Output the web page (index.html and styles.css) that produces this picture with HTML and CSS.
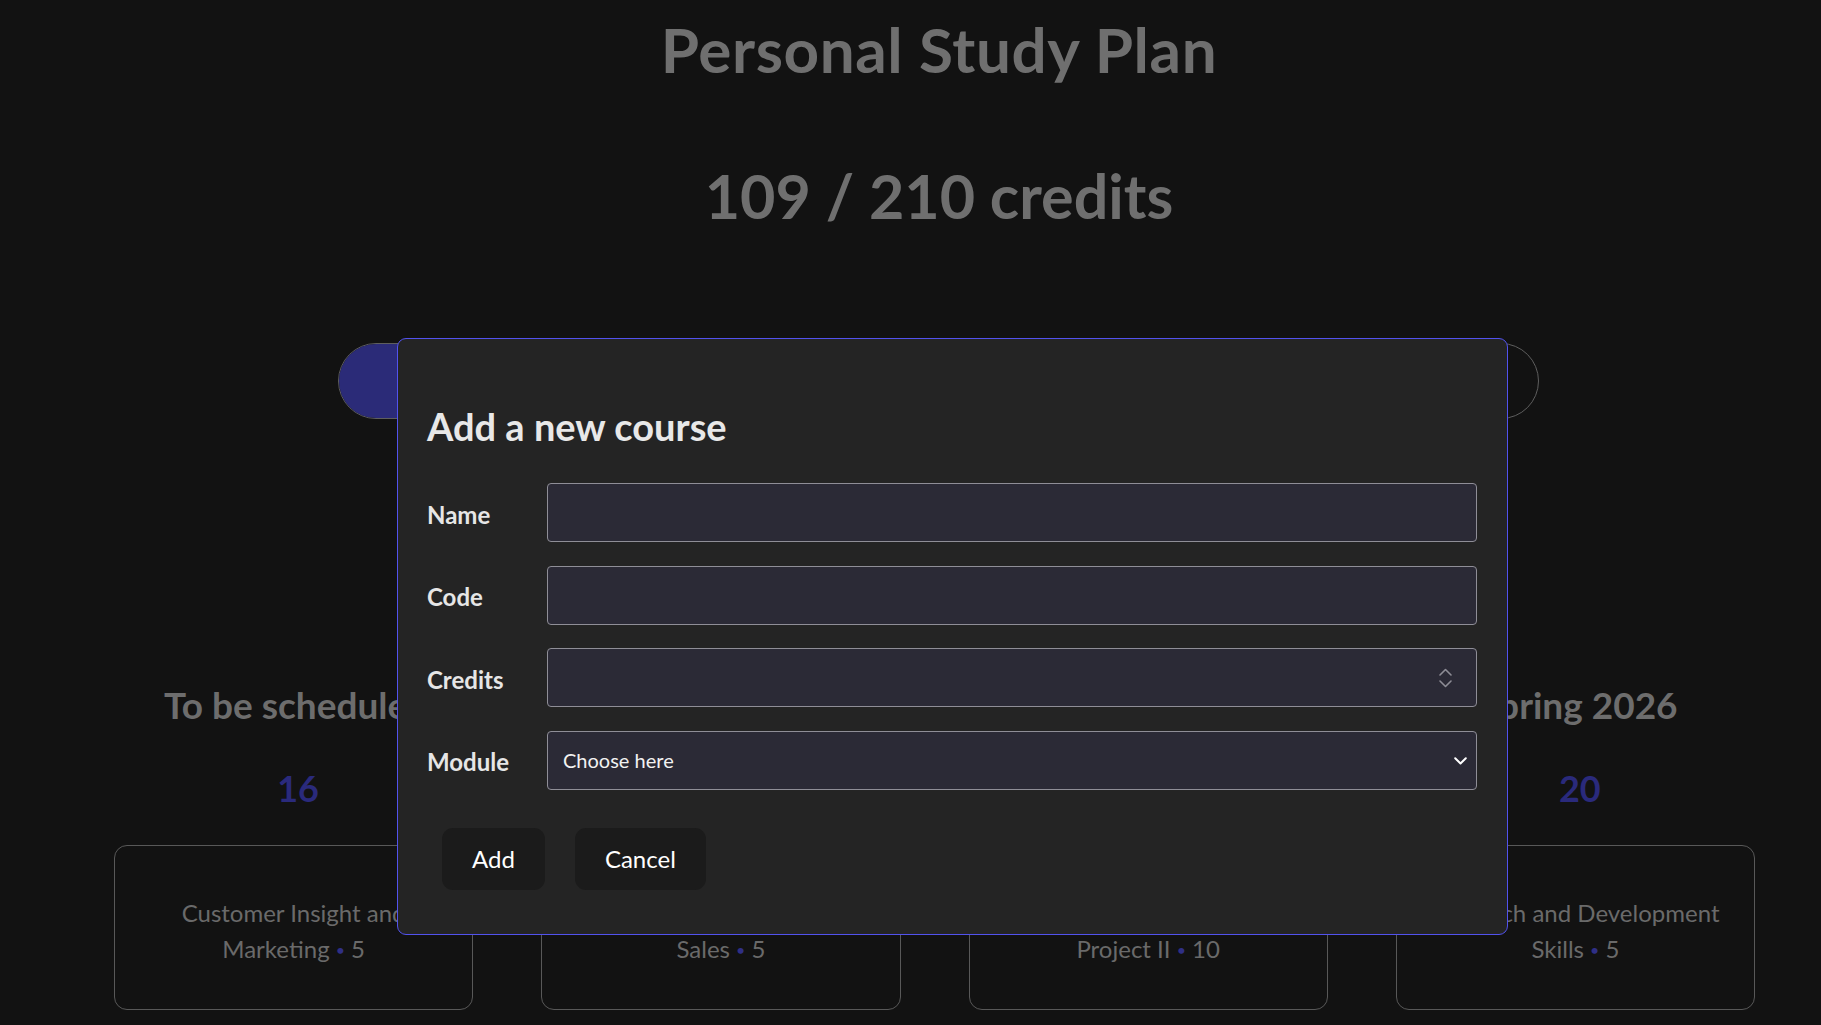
FILE: index.html
```html
<!DOCTYPE html>
<html lang="en">
<head>
<meta charset="utf-8">
<title>Personal Study Plan</title>
<link rel="stylesheet" href="styles.css">
</head>
<body>
<main class="page">
  <header class="summary">
    <h1 class="title">Personal Study Plan</h1>
    <h2 class="total">109 / 210 credits</h2>
  </header>
  <div class="progress"><div class="progress-fill" style="width:51.9%"></div></div>

  <section class="columns">
    <div class="column">
      <h3 class="col-title">To be scheduled</h3>
      <div class="col-count">16</div>
      <div class="card"><p>Customer Insight and Marketing <span class="pts">5</span></p></div>
    </div>
    <div class="column">
      <h3 class="col-title">Autumn 2025</h3>
      <div class="col-count">30</div>
      <div class="card"><p>Negotiation, Marketing and Sales <span class="pts">5</span></p></div>
    </div>
    <div class="column">
      <h3 class="col-title">Spring 2025</h3>
      <div class="col-count">30</div>
      <div class="card"><p>Interdisciplinary Bachelor Project II <span class="pts">10</span></p></div>
    </div>
    <div class="column">
      <h3 class="col-title">Spring 2026</h3>
      <div class="col-count">20</div>
      <div class="card"><p>Research and Development Skills <span class="pts">5</span></p></div>
    </div>
  </section>
</main>

<div class="dialog" role="dialog" aria-labelledby="dlg-title">
  <h2 class="dialog-title" id="dlg-title">Add a new course</h2>
  <form class="form">
    <label class="label" for="f-name">Name</label>
    <input class="field" id="f-name" type="text">
    <label class="label" for="f-code">Code</label>
    <input class="field" id="f-code" type="text">
    <label class="label" for="f-credits">Credits</label>
    <div class="field-wrap">
      <input class="field" id="f-credits" type="text" inputmode="numeric">
      <svg class="spin" width="13" height="20" viewBox="0 0 13 20" aria-hidden="true">
        <path d="M1 7 L6.5 1.5 L12 7" fill="none" stroke="#8e8d96" stroke-width="1.6" stroke-linecap="round" stroke-linejoin="round"/>
        <path d="M1 13 L6.5 18.5 L12 13" fill="none" stroke="#8e8d96" stroke-width="1.6" stroke-linecap="round" stroke-linejoin="round"/>
      </svg>
    </div>
    <label class="label" for="f-module">Module</label>
    <div class="field-wrap">
      <select class="field select" id="f-module">
        <option>Choose here</option>
      </select>
      <svg class="chev" width="13" height="8" viewBox="0 0 13 8" aria-hidden="true">
        <path d="M1.2 1.2 L6.5 6.5 L11.8 1.2" fill="none" stroke="#ffffff" stroke-width="2" stroke-linecap="round" stroke-linejoin="round"/>
      </svg>
    </div>
  </form>
  <div class="actions">
    <button class="btn" type="button">Add</button>
    <button class="btn" type="button">Cancel</button>
  </div>
</div>
</body>
</html>
```
FILE: styles.css
```css
* { box-sizing: border-box; }

html, body {
  margin: 0;
  padding: 0;
  background: #121212;
  height: 100%;
  overflow: hidden;
}

body {
  font-family: Lato, "Liberation Sans", sans-serif;
  color: #6c6c6c;
}

.page {
  width: 1641px;
  margin-left: 114px;
}

.summary {
  padding-left: 9px;
  text-align: center;
}

.title,
.total {
  margin: 0;
  line-height: 1.2;
  font-weight: 700;
  color: #6f6f6f;
}

.title {
  padding-top: 12px;
  font-size: 62px;
  letter-spacing: 0.6px;
}

.total {
  margin-top: 73px;
  font-size: 61px;
}

.progress {
  margin-top: 110px;
  margin-left: 224px;
  width: 1201px;
  height: 76px;
  border: 1px solid #5e5e5e;
  border-radius: 38px;
  overflow: hidden;
  background: #121212;
}

.progress-fill {
  height: 100%;
  background: #2b2b78;
}

.columns {
  margin-top: 264px;
  display: grid;
  grid-template-columns: repeat(4, 1fr);
  column-gap: 68px;
}

.column {
  display: flex;
  flex-direction: column;
  align-items: stretch;
  text-align: center;
}

.col-title {
  margin: 0;
  padding-left: 5px;
  font-size: 37px;
  line-height: 1.2;
  font-weight: 700;
  color: #6d6d6d;
}

.col-count {
  margin-top: 40px;
  padding-left: 9px;
  font-size: 36px;
  line-height: 1.2;
  font-weight: 700;
  color: #2a2a7c;
}

.card {
  margin-top: 35px;
  height: 165px;
  border: 1px solid #585858;
  border-radius: 13px;
  padding: 49px 22px 0;
}

.card p {
  margin: 0;
  font-size: 24px;
  line-height: 36px;
  color: #6a6a6a;
}

.pts::before {
  content: "•";
  color: #2f2f86;
  font-size: 16px;
  margin-right: 6px;
  vertical-align: 2px;
}

/* dialog */
.dialog {
  position: absolute;
  left: 397px;
  top: 338px;
  width: 1111px;
  background: #242424;
  border: 1px solid #5252ee;
  border-radius: 9px;
  padding: 65px 30px 44px 29px;
  color: #e6e6e6;
}

.dialog-title {
  margin: 0;
  font-size: 38px;
  line-height: 44px;
  font-weight: 700;
  color: #e8e8e8;
}

.form {
  margin-top: 35px;
  display: grid;
  grid-template-columns: 120px 1fr;
  grid-auto-rows: 59px;
  row-gap: 23.5px;
  align-items: center;
}

.label {
  padding-top: 5px;
  font-size: 24px;
  line-height: 1.2;
  font-weight: 700;
  color: #e6e6e6;
}

.field-wrap {
  position: relative;
  height: 59px;
}

.field {
  display: block;
  width: 100%;
  height: 59px;
  margin: 0;
  background: #2b2a36;
  border: 1px solid #8f8e97;
  border-radius: 4px;
  color: #f2f2f2;
  font-family: Lato, "Liberation Sans", sans-serif;
  font-size: 20px;
  padding: 0 16px;
  outline: none;
}

.select {
  appearance: none;
  -webkit-appearance: none;
  padding-left: 15px;
}

.spin {
  position: absolute;
  right: 25px;
  top: 20px;
}

.chev {
  position: absolute;
  right: 10px;
  top: 26px;
  pointer-events: none;
}

.actions {
  margin-top: 38.5px;
  margin-left: 15px;
  display: flex;
  gap: 30px;
}

.btn {
  height: 62px;
  padding: 0 30px;
  border: 0;
  border-radius: 11px;
  background: #1b1b1b;
  color: #ffffff;
  font-family: Lato, "Liberation Sans", sans-serif;
  font-size: 24px;
  font-weight: 400;
  line-height: 1.2;
  cursor: pointer;
}
```
